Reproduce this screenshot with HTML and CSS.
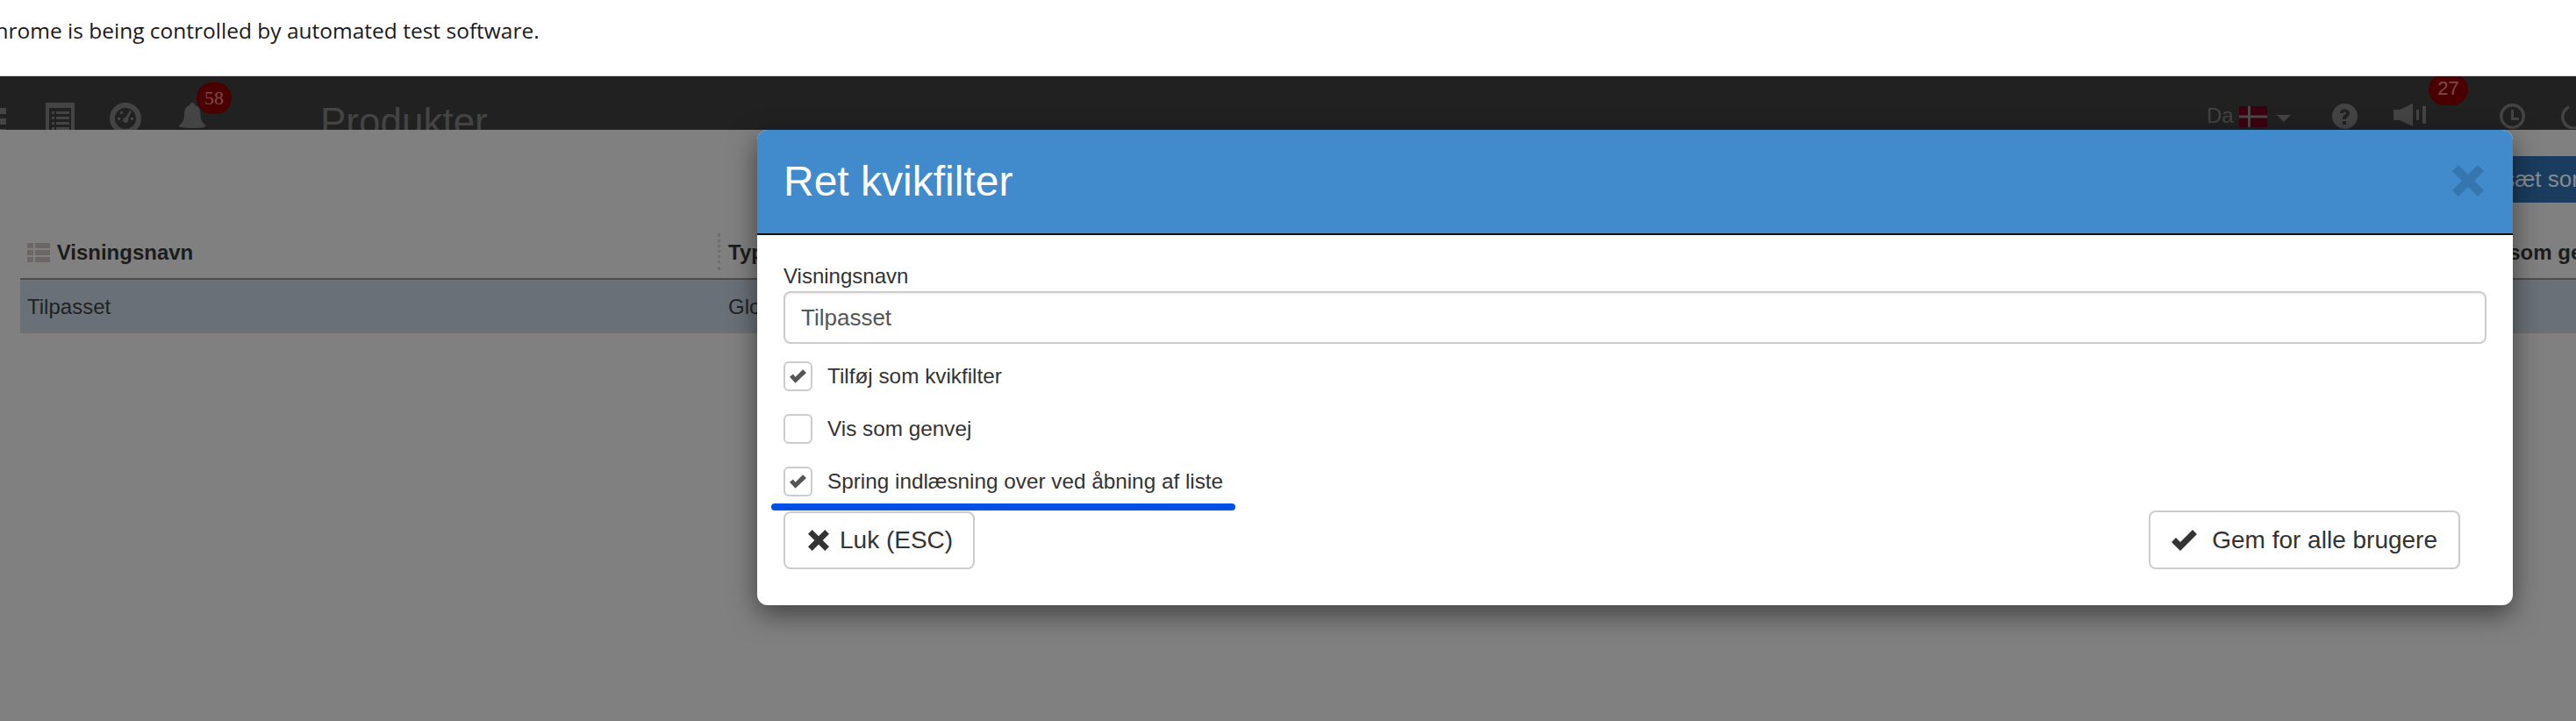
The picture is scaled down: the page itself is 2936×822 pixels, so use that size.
FILE: index.html
```html
<!DOCTYPE html>
<html lang="da">
<head>
<meta charset="UTF-8">
<meta name="viewport" content="width=device-width, initial-scale=1.0">
<title>Produkter</title>
<link rel="stylesheet" href="styles.css">
</head>
<body>
  <div class="infobar">
    <span class="infobar-text">Chrome is being controlled by automated test software.</span>
  </div>

  <header class="topbar">
    <svg class="ico-menu" viewBox="0 0 30 32"><path d="M0 3h30v7H0zM0 15h30v7H0zM0 27h30v5H0z"/></svg>
    <svg class="ico-list" viewBox="0 0 33 33"><path fill-rule="evenodd" d="M0 0h33v33H0zM4 6v27h25V6z"/><path d="M7 10h3v3H7zM12 10h15v3H12zM7 16h3v3H7zM12 16h15v3H12zM7 22h3v3H7zM12 22h15v3H12zM7 28h3v3H7zM12 28h15v3H12z"/></svg>
    <svg class="ico-gauge" viewBox="0 0 36 36"><path fill-rule="evenodd" d="M18 0a18 18 0 1 1 0 36a18 18 0 1 1 0-36zM18 6a12 12 0 1 0 0 24a12 12 0 1 0 0-24z"/><path d="M9 17h3v3H9zM12 10h3v3h-3zM24 17h3v3h-3zM23 9l2 1-4 9a3 3 0 1 1-3-2z"/></svg>
    <span class="bell-wrap">
      <svg class="ico-bell" viewBox="0 0 31 30"><path d="M15.500 0c2 0 3 1.500 3 3c4 1 6 5 6 10c0 7 2 10 6 13c0 2-2 3-15 3s-15.500-1-15.500-3c4-3 6-6 6-13c0-5 2-9 6-10c0-1.500 1-3 3.500-3z"/></svg>
      <span class="badge badge-bell">58</span>
    </span>
    <div class="page-title">Produkter</div>

    <div class="topbar-right">
      <span class="lang">Da</span>
      <svg class="flag" viewBox="0 0 32 24"><path fill="#3c0010" d="M0 0h32v24H0z"/><path fill="#4a4a4a" d="M10 0h3v24h-3zM0 10.500h32v3H0z"/></svg>
      <span class="caret"></span>
      <svg class="ico-help" viewBox="0 0 29 29"><path fill-rule="evenodd" d="M14.500 0a14.500 14.500 0 1 1 0 29a14.500 14.500 0 1 1 0-29zM9 11h4c0-2 3-2 3 0c0 2-4 2-4 6v1h4c0-3 4-3 4-7c0-6-11-6-11 0zM12 20v4h4v-4z"/></svg>
      <span class="speaker-wrap">
        <svg class="ico-speaker" viewBox="0 0 37 26"><path d="M0 7h7L22 0v26L7 19H0zM26 7h3v12h-3zM33 3h4v20h-4z"/></svg>
        <span class="badge badge-speaker">27</span>
      </span>
      <svg class="ico-clock" viewBox="0 0 29 29"><path fill-rule="evenodd" d="M14.500 0a14.500 14.500 0 1 1 0 29a14.500 14.500 0 1 1 0-29zM14.500 3.500a11 11 0 1 0 0 22a11 11 0 1 0 0-22z"/><path d="M13 7h3v9h6v3h-9z"/></svg>
      <svg class="ico-power" viewBox="0 0 29 29"><path fill="none" stroke="#444" stroke-width="3.500" d="M9 4a12.700 12.700 0 1 0 11 0"/></svg>
    </div>
  </header>

  <main class="content">
    <div class="toolbar">
      <button class="btn-primary" type="button">Indsæt som standard</button>
    </div>

    <table class="grid">
      <colgroup>
        <col class="col-name">
        <col class="col-type">
        <col class="col-short">
      </colgroup>
      <thead>
        <tr>
          <th>
            <svg class="ico-rows" viewBox="0 0 26 22"><path d="M0 0h7v6H0zM9 0h17v6H9zM0 8h7v6H0zM9 8h17v6H9zM0 16h7v6H0zM9 16h17v6H9z"/></svg>
            Visningsnavn
            <span class="col-handle"></span>
          </th>
          <th>Type</th>
          <th>Vis som genvej</th>
        </tr>
      </thead>
      <tbody>
        <tr>
          <td>Tilpasset</td>
          <td>Global</td>
          <td></td>
        </tr>
      </tbody>
    </table>

    <div class="modal">
      <div class="modal-header">
        <h2>Ret kvikfilter</h2>
        <svg class="modal-close" viewBox="0 0 36 36"><path d="M7 0L18 11L29 0L36 7L25 18L36 29L29 36L18 25L7 36L0 29L11 18L0 7z"/></svg>
      </div>
      <div class="modal-body">
        <label class="field-label" for="name">Visningsnavn</label>
        <input class="field-input" id="name" type="text" value="Tilpasset">

        <div class="check-row">
          <span class="check-box">
            <svg viewBox="0 0 29 24"><path d="M0 13L6 8L10 13L23 0L29 6L10 24z"/></svg>
          </span>
          Tilføj som kvikfilter
        </div>
        <div class="check-row">
          <span class="check-box"></span>
          Vis som genvej
        </div>
        <div class="check-row">
          <span class="check-box">
            <svg viewBox="0 0 29 24"><path d="M0 13L6 8L10 13L23 0L29 6L10 24z"/></svg>
          </span>
          Spring indlæsning over ved åbning af liste
          <span class="marker"></span>
        </div>

        <div class="modal-footer">
          <button class="btn btn-close" type="button">
            <svg class="ico-x" viewBox="0 0 36 36"><path d="M7 0L18 11L29 0L36 7L25 18L36 29L29 36L18 25L7 36L0 29L11 18L0 7z"/></svg>
            Luk (ESC)
          </button>
          <button class="btn btn-save" type="button">
            <svg class="ico-ok" viewBox="0 0 29 24"><path d="M0 14L5 9L10 14L24 0L29 5L10 24z"/></svg>
            Gem for alle brugere
          </button>
        </div>
      </div>
    </div>
  </main>
</body>
</html>
```

FILE: styles.css
```css
body {
  margin: 0;
  height: 822px;
  overflow: hidden;
  font-family: "Liberation Sans", Arial, sans-serif;
  background-color: #808080;
  color: #1c1c1c;
}

.infobar {
  height: 86px;
  border-bottom: 1px solid #d8d8d8;
  background-color: #fff;
}
.infobar-text {
  display: block;
  margin-left: -21px;
  padding-top: 18px;
  font-family: "Open Sans", sans-serif;
  font-size: 24.500px;
  line-height: 34px;
  color: #1a1a1a;
  white-space: nowrap;
}

.topbar {
  height: 61px;
  padding-top: 30px;
  box-sizing: border-box;
  overflow: hidden;
  display: flex;
  align-items: flex-start;
  background-color: #212121;
  fill: #444;
}
.ico-menu {
  width: 30px;
  height: 32px;
  margin-left: -23px;
  margin-top: 3px;
  flex: none;
}
.ico-list {
  width: 33px;
  height: 33px;
  margin-left: 45px;
  flex: none;
}
.ico-gauge {
  width: 36px;
  height: 36px;
  margin-left: 40px;
  flex: none;
}
.bell-wrap {
  position: relative;
  margin-left: 43px;
  width: 31px;
  height: 31px;
  flex: none;
}
.ico-bell {
  width: 31px;
  height: 30px;
  display: block;
}
.badge {
  position: absolute;
  background-color: #4b0000;
  border-radius: 18px;
  text-align: center;
}
.badge-bell {
  left: 20px;
  top: -23px;
  width: 40px;
  height: 36px;
  line-height: 36px;
  font-family: "Liberation Serif", serif;
  font-size: 22px;
  color: #7d4a4a;
}
.page-title {
  margin-left: 130px;
  font-size: 44px;
  line-height: 44px;
  color: #444;
  white-space: nowrap;
}

.topbar-right {
  margin-left: auto;
  width: 421px;
  display: flex;
  align-items: flex-start;
  flex: none;
}
.lang {
  font-size: 24px;
  line-height: 24px;
  margin-top: 3px;
  width: 37px;
  color: #444;
  flex: none;
}
.flag {
  width: 32px;
  height: 24px;
  margin-top: 4px;
  flex: none;
}
.caret {
  width: 0;
  height: 0;
  margin: 14px 0 0 11px;
  border-left: 8px solid transparent;
  border-right: 8px solid transparent;
  border-top: 8px solid #444;
  flex: none;
}
.ico-help {
  width: 29px;
  height: 29px;
  margin: 1px 0 0 47px;
  flex: none;
}
.speaker-wrap {
  position: relative;
  margin: 1px 0 0 41px;
  width: 37px;
  height: 26px;
  flex: none;
}
.ico-speaker {
  width: 37px;
  height: 26px;
  display: block;
}
.badge-speaker {
  left: 40px;
  top: -34px;
  width: 45px;
  height: 36px;
  line-height: 34px;
  font-size: 22px;
  color: #7d4a4a;
}
.ico-clock {
  width: 29px;
  height: 29px;
  margin: 1px 0 0 84px;
  flex: none;
}
.ico-power {
  width: 29px;
  height: 29px;
  margin: 1px 0 0 41px;
  flex: none;
}

.content {
  position: relative;
  height: 674px;
}
.toolbar {
  padding: 30px 0 0 2793px;
  height: 53px;
}
.btn-primary {
  height: 53px;
  padding: 0 24px;
  border: none;
  background-color: #1a3c5e;
  color: #858b92;
  font-family: inherit;
  font-size: 26px;
  white-space: nowrap;
}

.grid {
  margin: 35px 0 0 23px;
  width: 2913px;
  table-layout: fixed;
  border-collapse: collapse;
  font-size: 24px;
}
.col-name {
  width: 799px;
}
.col-type {
  width: 1987px;
}
.col-short {
  width: 127px;
}
.grid th {
  position: relative;
  height: 43px;
  padding: 8px 8px 0;
  vertical-align: top;
  text-align: left;
  white-space: nowrap;
  border-bottom: 2px solid #4d4d4d;
  color: #1c1c1c;
}
.ico-rows {
  width: 26px;
  height: 22px;
  margin-right: 1px;
  vertical-align: -3px;
  fill: #6c6664;
}
.col-handle {
  position: absolute;
  top: 0;
  right: 1px;
  height: 42px;
  border-right: 3px dotted #6e6e6e;
}
.grid td {
  height: 57px;
  padding: 2px 8px 0;
  background-color: #697077;
  border-bottom: 2px solid #6f6f6f;
  color: #222;
}

.modal {
  position: absolute;
  left: 863px;
  top: 0;
  width: 2001px;
  height: 542px;
  background-color: #fff;
  border-radius: 12px;
  box-shadow: 0 10px 30px rgba(0, 0, 0, 0.5);
}
.modal-header {
  height: 120px;
  box-sizing: border-box;
  padding: 0 33px 2px 30px;
  display: flex;
  align-items: center;
  background-color: #418acb;
  border-bottom: 2px solid #111;
  border-radius: 12px 12px 0 0;
}
.modal-header h2 {
  margin: 0;
  font-size: 48px;
  font-weight: normal;
  color: #fff;
}
.modal-close {
  width: 36px;
  height: 36px;
  margin-left: auto;
  fill: #3676ae;
}
.modal-body {
  padding: 33px 30px 0;
}
.field-label {
  display: block;
  font-size: 24px;
  line-height: 28px;
  margin-bottom: 3px;
  color: #333;
}
.field-input {
  display: block;
  width: 100%;
  height: 60px;
  box-sizing: border-box;
  padding: 0 18px;
  border: 2px solid #ccc;
  border-radius: 8px;
  font-family: inherit;
  font-size: 26px;
  color: #555;
  box-shadow: inset 0 2px 2px rgba(0, 0, 0, 0.05);
}
.check-row {
  position: relative;
  display: flex;
  align-items: center;
  gap: 17px;
  height: 34px;
  margin-top: 26px;
  font-size: 24.300px;
  color: #333;
}
.field-input + .check-row {
  margin-top: 20px;
}
.check-box {
  width: 33px;
  height: 34px;
  box-sizing: border-box;
  display: flex;
  align-items: center;
  justify-content: center;
  border: 2px solid #ccc;
  border-radius: 6px;
  flex: none;
}
.check-box svg {
  width: 19px;
  height: 16px;
  fill: #555;
}
.marker {
  position: absolute;
  left: -14px;
  top: 42px;
  width: 529px;
  height: 8px;
  background-color: #0050e6;
  border-radius: 4px;
}
.modal-footer {
  display: flex;
  justify-content: space-between;
  align-items: flex-end;
  margin-top: 16px;
  padding-right: 30px;
}
.btn {
  display: flex;
  align-items: center;
  box-sizing: border-box;
  background-color: #fff;
  border: 2px solid #ccc;
  border-radius: 8px;
  font-family: inherit;
  font-size: 28px;
  color: #333;
}
.btn-close {
  height: 66px;
  padding: 0 23px 0 26px;
  gap: 12px;
}
.btn-save {
  height: 67px;
  padding: 0 24px 0 24px;
  gap: 17px;
}
.ico-x {
  width: 24px;
  height: 24px;
  fill: #333;
}
.ico-ok {
  width: 29px;
  height: 24px;
  fill: #333;
}
```
